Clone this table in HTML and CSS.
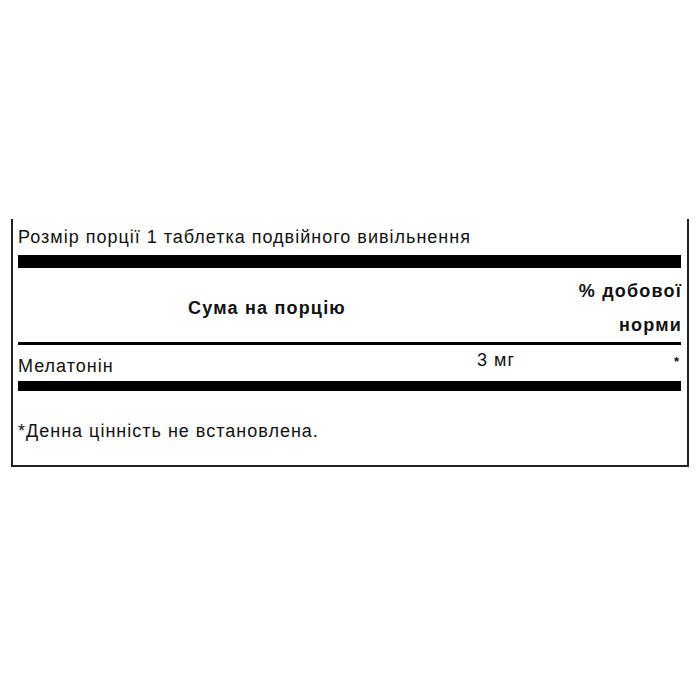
FILE: index.html
```html
<!DOCTYPE html>
<html lang="uk">
<head>
<meta charset="utf-8">
<link rel="stylesheet" href="styles.css">
</head>
<body>
<div class="panel">
  <div class="serving">Розмір порції 1 таблетка подвійного вивільнення</div>
  <div class="bar thick"></div>
  <div class="head">
    <div class="head-left">Сума на порцію</div>
    <div class="head-right"><div>% добової</div><div>норми</div></div>
  </div>
  <div class="rule"></div>
  <div class="row">
    <div class="name">Мелатонін</div>
    <div class="amount">3 мг</div>
    <div class="dv">*</div>
  </div>
  <div class="bar medium"></div>
  <div class="note">*Денна цінність не встановлена.</div>
</div>
</body>
</html>
```
FILE: styles.css
```css
html, body {
  margin: 0;
  padding: 0;
  background: #fff;
}
body {
  font-family: "Liberation Sans", Arial, sans-serif;
  font-size: 18px;
  letter-spacing: 1px;
  color: #111;
}
.panel {
  box-sizing: border-box;
  margin: 219px 0 0 11px;
  width: 678px;
  border: 2px solid #222;
  border-top: none;
  padding: 0 6px 0 5px;
}
.serving {
  line-height: 36px;
  height: 36px;
}
.bar {
  background: #000;
}
.bar.thick { height: 13px; }
.bar.medium { height: 10px; }
.rule { height: 3px; background: #000; }
.head {
  display: flex;
  height: 74px;
  box-sizing: border-box;
  padding-top: 6px;
  font-weight: bold;
  letter-spacing: 1.2px;
}
.head-left {
  width: 498px;
  text-align: center;
  align-self: center;
}
.head-right {
  flex: 1;
  text-align: right;
  line-height: 34px;
  margin-right: -1px;
}
.row {
  display: flex;
  align-items: flex-start;
  height: 36px;
  line-height: 30px;
}
.name {
  width: 459px;
  margin-top: 6px;
}
.amount {
  margin-top: 0;
}
.dv {
  margin-left: auto;
  margin-top: 2px;
  font-size: 13px;
  font-weight: bold;
  letter-spacing: 0;
  margin-right: 2px;
}
.note {
  line-height: 36px;
  padding: 22px 0 16px;
}
```
